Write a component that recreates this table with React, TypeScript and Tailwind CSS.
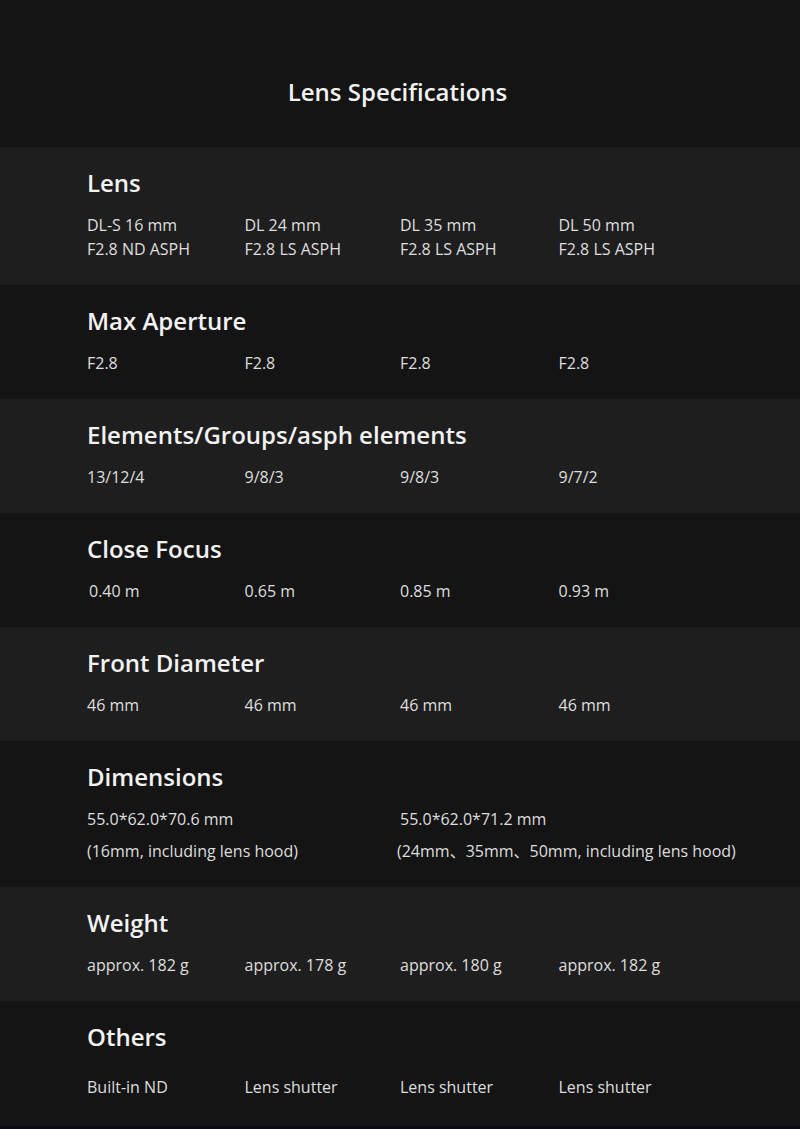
type Spec = {
  title: string;
  values?: string[][];
  extra?: "dims" | "others";
};

const specs: Spec[] = [
  {
    title: "Lens",
    values: [
      ["DL-S 16 mm", "F2.8 ND ASPH"],
      ["DL 24 mm", "F2.8 LS ASPH"],
      ["DL 35 mm", "F2.8 LS ASPH"],
      ["DL 50 mm", "F2.8 LS ASPH"],
    ],
  },
  { title: "Max Aperture", values: [["F2.8"], ["F2.8"], ["F2.8"], ["F2.8"]] },
  {
    title: "Elements/Groups/asph elements",
    values: [["13/12/4"], ["9/8/3"], ["9/8/3"], ["9/7/2"]],
  },
  {
    title: "Close Focus",
    values: [["0.40 m"], ["0.65 m"], ["0.85 m"], ["0.93 m"]],
  },
  {
    title: "Front Diameter",
    values: [["46 mm"], ["46 mm"], ["46 mm"], ["46 mm"]],
  },
  { title: "Dimensions", extra: "dims" },
  {
    title: "Weight",
    values: [["approx. 182 g"], ["approx. 178 g"], ["approx. 180 g"], ["approx. 182 g"]],
  },
  {
    title: "Others",
    extra: "others",
    values: [["Built-in ND"], ["Lens shutter"], ["Lens shutter"], ["Lens shutter"]],
  },
];

const SpecRow = ({ spec, index }: { spec: Spec; index: number }) => {
  const bg = index % 2 === 0 ? "bg-[#1e1e1e]" : "bg-[#141414]";
  const isOthers = spec.extra === "others";
  const isFocus = spec.title === "Close Focus";
  return (
    <div className={`${bg} px-[87px] pt-[20px] ${isOthers ? "pb-[27px]" : "pb-[24px]"}`}>
      <h3 className="text-[24px] font-semibold leading-[32px] text-[#f2f2f2]">{spec.title}</h3>
      {spec.extra === "dims" ? (
        <div className="mt-[14px] grid grid-cols-2 w-[626px] text-[16px] leading-[24px] text-[#dedede] whitespace-nowrap">
          <div className="flex flex-col gap-2">
            <span>55.0*62.0*70.6 mm</span>
            <span>(16mm, including lens hood)</span>
          </div>
          <div className="flex flex-col gap-2">
            <span>55.0*62.0*71.2 mm</span>
            <span className="-ml-[3px]">(24mm、35mm、50mm, including lens hood)</span>
          </div>
        </div>
      ) : (
        <div
          className={`grid grid-cols-4 w-[626px] text-[16px] leading-[24px] text-[#dedede] ${
            isOthers ? "mt-[22px]" : "mt-[14px]"
          }`}
        >
          {spec.values?.map((lines, i) => (
            <div
              key={i}
              className={`flex flex-col ${i === 3 ? "pl-[2px]" : ""} ${i === 1 ? "pl-[1px]" : ""} ${
                i === 0 && isFocus ? "pl-[2px]" : ""
              }`}
            >
              {lines.map((l) => (
                <span key={l}>{l}</span>
              ))}
            </div>
          ))}
        </div>
      )}
    </div>
  );
};

export default function App() {
  return (
    <div
      className="min-h-screen w-[800px] bg-[#0b0b16]"
      style={{ fontFamily: '"Open Sans", "Noto Sans CJK SC", sans-serif' }}
    >
      <div className="bg-[#141414] h-[147px] flex items-center justify-center pt-[36px] pr-[5px]">
        <h2 className="text-[24px] font-semibold leading-[32px] text-[#f2f2f2]">
          Lens Specifications
        </h2>
      </div>
      {specs.map((s, i) => (
        <SpecRow key={s.title} spec={s} index={i} />
      ))}
    </div>
  );
}
